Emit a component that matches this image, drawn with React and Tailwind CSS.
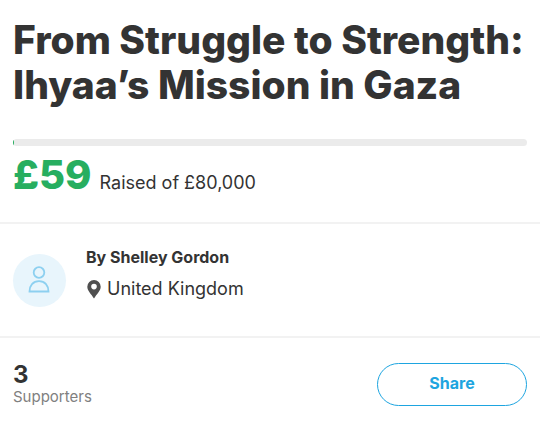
const campaign = {
  title: "From Struggle to Strength: Ihyaa’s Mission in Gaza",
  raised: 59,
  goal: 80000,
  organiser: "Shelley Gordon",
  location: "United Kingdom",
  supporters: 3,
};

const PersonIcon = () => (
  <svg className="size-7" viewBox="0 0 28 28" fill="none" stroke="#8dd0f0" strokeWidth="1.800" aria-hidden="true">
    <circle cx="13" cy="6.500" r="5.300" />
    <path d="M3.500 25.500c0-6 3.500-10.300 9.500-10.300s9.500 4.300 9.500 10.300z" />
  </svg>
);

const PinIcon = () => (
  <svg className="h-5 w-4" viewBox="0 0 16 20" fill="#4f4f4f" aria-hidden="true">
    <path fillRule="evenodd" d="M8 1a6.700 6.700 0 0 0-6.700 6.700c0 4 4 7.300 6.700 11.800 2.700-4.500 6.700-7.800 6.700-11.800a6.700 6.700 0 0 0-6.700-6.700zm0 3.800a2.800 2.800 0 1 1 0 5.600 2.800 2.800 0 0 1 0-5.600z" />
  </svg>
);

const Progress = () => (
  <section className="border-b-2 border-[#f2f2f2] px-[13px] pt-[17px] pb-[25px]">
    <h1 className="text-[39px] leading-[45px] font-extrabold">{campaign.title}</h1>
    <div className="mt-8 h-[7px] overflow-hidden rounded-full bg-[#ebebeb]" role="progressbar" aria-label="Raised" aria-valuenow={campaign.raised} aria-valuemax={campaign.goal}>
      <div className="h-full bg-[#27ae60]" style={{ width: `${(campaign.raised / campaign.goal) * 100}%` }} />
    </div>
    <p className="mt-[9px] flex items-baseline gap-2 text-lg">
      <strong className="text-[40px] leading-10 font-extrabold text-[#27ae60]">£{campaign.raised}</strong>
      <span>Raised of £{campaign.goal.toLocaleString("en-GB")}</span>
    </p>
  </section>
);

const Organiser = () => (
  <section className="flex items-center gap-5 border-b-2 border-[#f2f2f2] px-[13px] py-[21px]">
    <div className="flex size-[53px] items-center justify-center rounded-full bg-[#e8f5fc]">
      <PersonIcon />
    </div>
    <div className="pb-[10px]">
      <p className="text-base font-bold">By {campaign.organiser}</p>
      <p className="mt-1 flex items-center gap-[5px] text-lg leading-8">
        <PinIcon />
        {campaign.location}
      </p>
    </div>
  </section>
);

const Actions = () => (
  <section className="flex items-center justify-between px-[13px] py-[23px]">
    <div className="pt-[2px]">
      <p className="text-2xl leading-6 font-bold">{campaign.supporters}</p>
      <p className="text-[15px] leading-5 text-[#808080]">Supporters</p>
    </div>
    <button type="button" className="h-[43px] w-[150px] rounded-full border border-[#1ea5e0] pb-[2px] text-base font-bold text-[#1ea5e0]">Share</button>
  </section>
);

const App = () => (
  <main className="bg-white font-['Inter',sans-serif] text-[#333]">
    <Progress />
    <Organiser />
    <Actions />
  </main>
);

export default App;
